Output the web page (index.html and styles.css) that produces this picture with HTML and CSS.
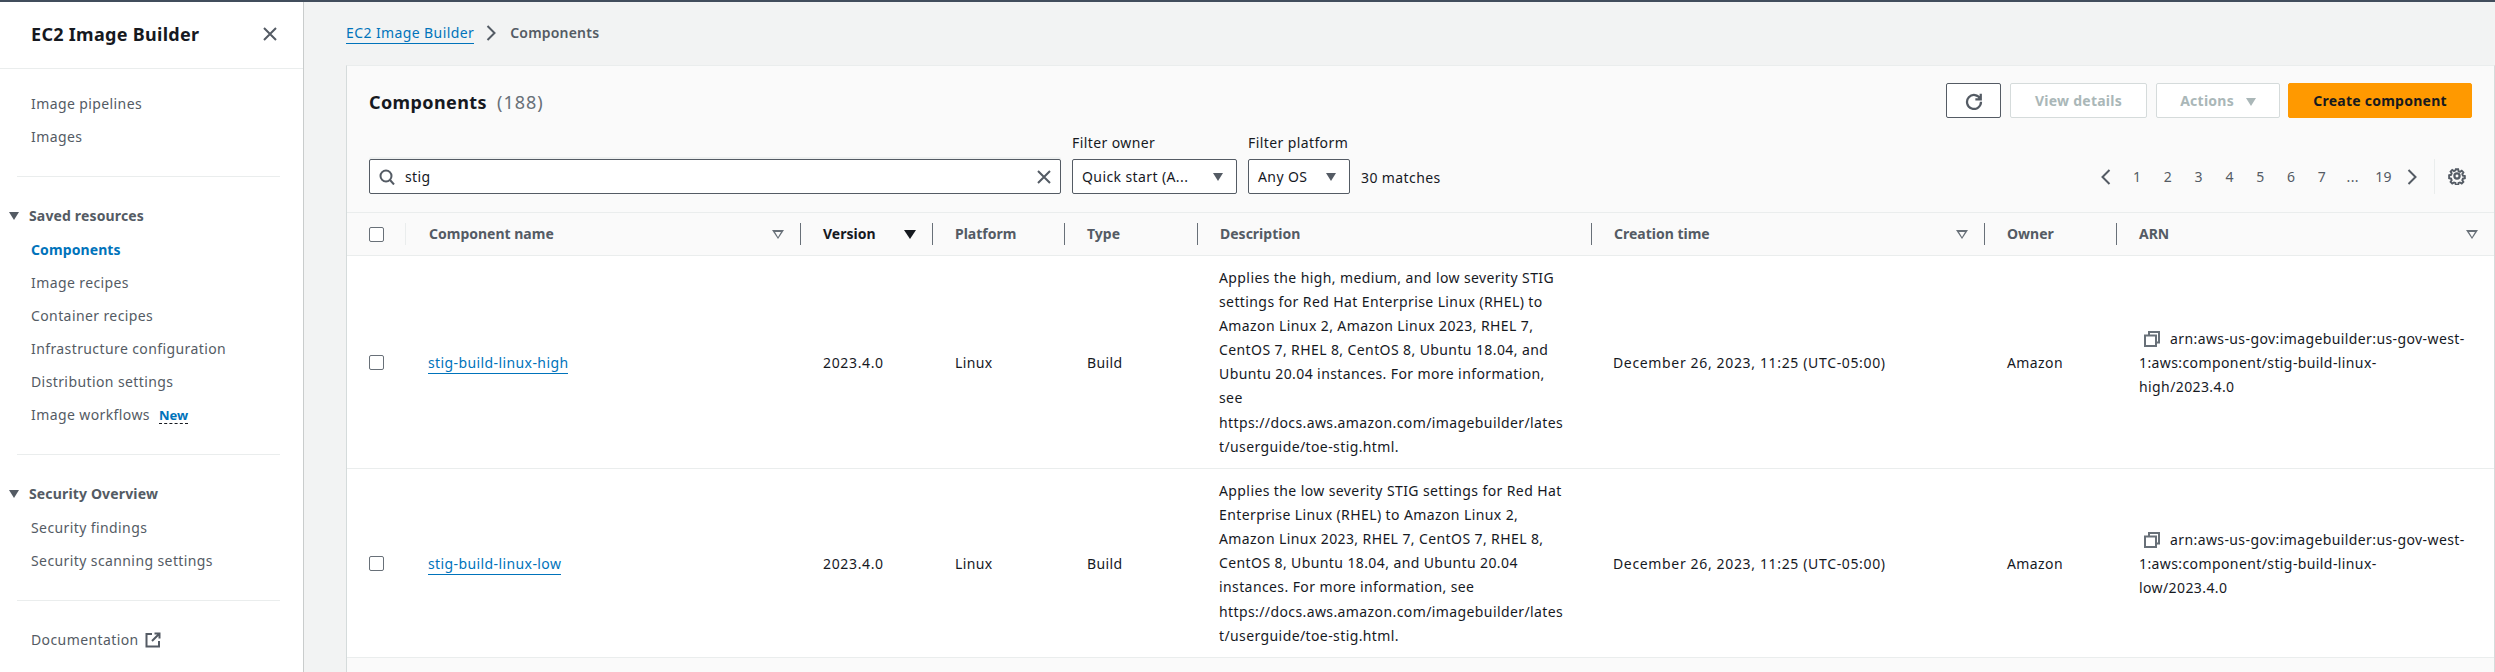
FILE: index.html
```html
<!doctype html>
<html>
<head>
    <meta charset="utf-8">
    <title>Components - EC2 Image Builder</title>
    <link rel="stylesheet" href="styles.css">
</head>

<body>
    <div class="page">

        <aside class="sidebar">
            <div class="side-head">
                <span class="side-title">EC2 Image Builder</span>
                <svg class="close-icon" viewBox="0 0 16 16"><path d="M2 2l12 12M14 2L2 14"/></svg>
            </div>

            <ul class="nav first">
                <li>Image pipelines</li>
                <li>Images</li>
            </ul>
            <hr class="nav-line">

            <div class="nav-group"><i class="caret"></i>Saved resources</div>
            <ul class="nav">
                <li class="active">Components</li>
                <li>Image recipes</li>
                <li>Container recipes</li>
                <li>Infrastructure configuration</li>
                <li>Distribution settings</li>
                <li>Image workflows <span class="new">New</span></li>
            </ul>
            <hr class="nav-line">

            <div class="nav-group"><i class="caret"></i>Security Overview</div>
            <ul class="nav">
                <li>Security findings</li>
                <li>Security scanning settings</li>
            </ul>
            <hr class="nav-line">

            <ul class="nav docs">
                <li>Documentation
                    <svg class="ext-icon" viewBox="0 0 16 16"><path d="M7 2H1.500v12.500H14V9M9.500 1.500h5v5M14.500 1.500L7 9"/></svg>
                </li>
            </ul>
        </aside>

        <main class="main">
            <div class="crumbs">
                <a class="crumb-link">EC2 Image Builder</a>
                <svg class="crumb-sep" viewBox="0 0 10 16"><path d="M1.500 1l7 7-7 7"/></svg>
                <span class="crumb-now">Components</span>
            </div>

            <section class="card">
                <div class="card-top">
                    <h1>Components <span class="count">(188)</span></h1>
                    <div class="actions">
                        <button class="btn refresh">
                            <svg viewBox="0 0 16 16"><path d="M13.600 6.200A6.200 6.200 0 1 0 14.200 8.600M14 1.500v5H9.200"/></svg>
                        </button>
                        <button class="btn off details">View details</button>
                        <button class="btn off act">Actions <i class="tri"></i></button>
                        <button class="btn primary">Create component</button>
                    </div>
                </div>

                <div class="filters">
                    <div class="search">
                        <svg class="search-icon" viewBox="0 0 16 16"><circle cx="7" cy="7" r="5.500"/><path d="M11 11l4 4.500"/></svg>
                        <span class="search-text">stig</span>
                        <svg class="clear-icon" viewBox="0 0 16 16"><path d="M2 2l12 12M14 2L2 14"/></svg>
                    </div>
                    <div class="field owner">
                        <label>Filter owner</label>
                        <div class="select"><span>Quick start (A...</span><i class="tri dark"></i></div>
                    </div>
                    <div class="field platform">
                        <label>Filter platform</label>
                        <div class="select"><span>Any OS</span><i class="tri dark"></i></div>
                    </div>
                    <span class="matches">30 matches</span>

                    <div class="pager">
                        <svg class="pg-arrow prev" viewBox="0 0 10 16"><path d="M8.500 1l-7 7 7 7"/></svg>
                        <span>1</span><span>2</span><span>3</span><span>4</span><span>5</span><span>6</span><span>7</span><span class="dots">...</span><span>19</span>
                        <svg class="pg-arrow next" viewBox="0 0 10 16"><path d="M1.500 1l7 7-7 7"/></svg>
                        <div class="pg-gear">
                            <svg viewBox="0 0 16 16"><path d="M6.800 1h2.400l.4 2 1.500.7 1.800-1.100 1.700 1.700-1.100 1.800.6 1.500 2 .4v2.400l-2 .4-.6 1.500 1.100 1.800-1.700 1.700-1.800-1.100-1.500.6-.4 2H6.800l-.4-2-1.500-.6-1.800 1.100-1.700-1.700 1.100-1.800-.6-1.500-2-.4V7.200l2-.4.6-1.500-1.100-1.800 1.700-1.700 1.800 1.100 1.500-.7z" transform="translate(1.100 1.100) scale(.86)"/><circle cx="8" cy="8" r="2.300"/></svg>
                        </div>
                    </div>
                </div>

                <table class="grid">
                    <colgroup>
                        <col class="c-check"><col class="c-name"><col class="c-ver"><col class="c-plat"><col class="c-type"><col class="c-desc"><col class="c-time"><col class="c-owner"><col class="c-arn">
                    </colgroup>
                    <thead>
                        <tr>
                            <th class="check-cell"><i class="box"></i></th>
                            <th><div class="th faint">Component name <i class="sort"></i></div></th>
                            <th><div class="th now">Version <i class="sort down"></i></div></th>
                            <th><div class="th">Platform</div></th>
                            <th><div class="th">Type</div></th>
                            <th><div class="th">Description</div></th>
                            <th><div class="th">Creation time <i class="sort"></i></div></th>
                            <th><div class="th">Owner</div></th>
                            <th><div class="th">ARN <i class="sort"></i></div></th>
                        </tr>
                    </thead>
                    <tbody>
                        <tr>
                            <td class="check-cell"><i class="box"></i></td>
                            <td><a class="link">stig-build-linux-high</a></td>
                            <td class="num">2023.4.0</td>
                            <td>Linux</td>
                            <td>Build</td>
                            <td class="desc">Applies the high, medium, and low severity STIG<br>settings for Red Hat Enterprise Linux (RHEL) to<br>Amazon Linux 2, Amazon Linux 2023, RHEL 7,<br>CentOS 7, RHEL 8, CentOS 8, Ubuntu 18.04, and<br>Ubuntu 20.04 instances. For more information,<br>see<span class="url">https://docs.aws.amazon.com/imagebuilder/lates<br>t/userguide/toe-stig.html.</span></td>
                            <td class="num time">December 26, 2023, 11:25 (UTC-05:00)</td>
                            <td>Amazon</td>
                            <td class="arn"><svg class="copy" viewBox="0 0 16 16"><path d="M5 4V1h10v10.500h-3M1 4.500h11V15H1z"/></svg>arn:aws-us-gov:imagebuilder:us-gov-west-<br>1:aws:component/stig-build-linux-<br>high/2023.4.0</td>
                        </tr>
                        <tr>
                            <td class="check-cell"><i class="box"></i></td>
                            <td><a class="link">stig-build-linux-low</a></td>
                            <td class="num">2023.4.0</td>
                            <td>Linux</td>
                            <td>Build</td>
                            <td class="desc">Applies the low severity STIG settings for Red Hat<br>Enterprise Linux (RHEL) to Amazon Linux 2,<br>Amazon Linux 2023, RHEL 7, CentOS 7, RHEL 8,<br>CentOS 8, Ubuntu 18.04, and Ubuntu 20.04<br>instances. For more information, see<span class="url">https://docs.aws.amazon.com/imagebuilder/lates<br>t/userguide/toe-stig.html.</span></td>
                            <td class="num time">December 26, 2023, 11:25 (UTC-05:00)</td>
                            <td>Amazon</td>
                            <td class="arn"><svg class="copy" viewBox="0 0 16 16"><path d="M5 4V1h10v10.500h-3M1 4.500h11V15H1z"/></svg>arn:aws-us-gov:imagebuilder:us-gov-west-<br>1:aws:component/stig-build-linux-<br>low/2023.4.0</td>
                        </tr>
                    </tbody>
                </table>
            </section>
        </main>
    </div>
</body>
</html>
```

FILE: styles.css
```css
* {
    box-sizing: border-box;
}
html, body {
    margin: 0;
    height: 100%;
    overflow: hidden;
}
body {
    font-family: "Noto Sans", "Open Sans", sans-serif;
    font-size: 14px;
    line-height: 24px;
    letter-spacing: .4px;
    color: #16191f;
    background: #f2f3f3;
}
svg {
    display: block;
    fill: none;
    stroke: #545b64;
    stroke-width: 2;
}
i {
    display: inline-block;
}

.page {
    display: flex;
    height: 672px;
    border-top: 2px solid #414d5c;
}

/* left nav */
.sidebar {
    width: 304px;
    flex: none;
    background: #fff;
    border-right: 1px solid #c9cccc;
    color: #545b64;
}
.side-head {
    height: 67px;
    padding: 0 24px 2px 31px;
    display: flex;
    align-items: center;
    justify-content: space-between;
    border-bottom: 1px solid #eaeded;
}
.side-title {
    font-size: 18px;
    font-weight: 700;
    letter-spacing: .3px;
    color: #16191f;
}
.close-icon {
    width: 16px;
    height: 16px;
    margin-right: 1px;
}
.nav {
    list-style: none;
    margin: 0;
    padding: 0 0 0 31px;
}
.nav li {
    height: 33px;
    line-height: 33px;
    white-space: nowrap;
}
.nav.first {
    padding-top: 18px;
}
.nav.docs {
    margin-top: -1px;
}
.nav .active {
    color: #0073bb;
    font-weight: 700;
    letter-spacing: .1px;
}
.nav-line {
    margin: 23px 23px 23px 17px;
    border: 0;
    border-top: 1px solid #eaeded;
}
.nav-group {
    height: 34px;
    line-height: 33px;
    margin-top: -1px;
    padding-left: 9px;
    font-weight: 700;
    letter-spacing: .15px;
}
.caret {
    width: 0;
    height: 0;
    margin-right: 10px;
    border-style: solid;
    border-width: 8px 5.5px 0;
    border-color: #545b64 transparent transparent;
    vertical-align: 1px;
}
.new {
    margin-left: 5px;
    font-size: 13px;
    font-weight: 700;
    letter-spacing: 0;
    color: #0073bb;
    border-bottom: 1px dashed #16191f;
    line-height: 16px;
    display: inline-block;
}
.ext-icon {
    display: inline-block;
    width: 16px;
    height: 16px;
    margin-left: 2px;
    vertical-align: -3px;
}

/* main */
.main {
    flex: 1;
    min-width: 0;
    padding-left: 42px;
}
.crumbs {
    height: 63px;
    padding-bottom: 1px;
    display: flex;
    align-items: center;
}
.crumb-link, .link {
    color: #0073bb;
    border-bottom: 1px solid #0073bb;
    line-height: 20px;
    display: inline-block;
}
.crumb-sep {
    width: 10px;
    height: 16px;
    margin: 0 14px 0 12px;
}
.crumb-now {
    font-weight: 600;
    letter-spacing: .2px;
    color: #545b64;
}

.card {
    background: #fafafa;
    border-top: 1px solid #eaeded;
    border-left: 1px solid #d5dbdb;
    border-right: 1px solid #d5dbdb;
    height: 607px;
}
.card-top {
    height: 76px;
    padding: 17px 22px 0 22px;
    display: flex;
    justify-content: space-between;
    align-items: flex-start;
}
h1 {
    margin: 0;
    padding-top: 2px;
    font-size: 18px;
    line-height: 35px;
    font-weight: 700;
    letter-spacing: .4px;
}
.count {
    margin-left: 5px;
    font-weight: 400;
    letter-spacing: 1px;
    color: #687078;
}
.actions {
    display: flex;
    gap: 9px;
}
.btn {
    height: 35px;
    padding: 0;
    font: 700 14px "Noto Sans", sans-serif;
    letter-spacing: .25px;
    background: #fff;
    border: 1px solid #545b64;
    border-radius: 2px;
}
.refresh {
    width: 55px;
    display: flex;
    align-items: center;
    justify-content: center;
}
.refresh svg {
    width: 18px;
    height: 18px;
}
.off {
    color: #aab7b8;
    border-color: #d5dbdb;
}
.details {
    width: 137px;
}
.act {
    width: 124px;
}
.primary {
    width: 184px;
    margin-left: -1px;
    border-color: #ff9900;
    background: #ff9900;
    color: #16191f;
}
.tri {
    width: 0;
    height: 0;
    margin-left: 8px;
    border-style: solid;
    border-width: 8px 5.5px 0;
    border-color: #aab7b8 transparent transparent;
    vertical-align: 0;
}
.tri.dark {
    border-color: #545b64 transparent transparent;
    margin: 0;
}

.filters {
    height: 70px;
    padding: 0 22px 18px;
    display: flex;
    align-items: flex-end;
}
.search {
    width: 692px;
    height: 35px;
    padding: 0 8px 0 9px;
    display: flex;
    align-items: center;
    background: #fff;
    border: 1px solid #545b64;
    border-radius: 2px;
    box-shadow: 0 -2px 0 #eef0f0;
}
.search-icon {
    width: 16px;
    height: 16px;
}
.search-text {
    flex: 1;
    margin-left: 10px;
}
.clear-icon {
    width: 16px;
    height: 16px;
}
.field {
    margin-left: 11px;
}
.field label {
    display: block;
    height: 26px;
    line-height: 20px;
    color: #16191f;
}
.select {
    height: 35px;
    padding: 0 13px 0 9px;
    display: flex;
    align-items: center;
    justify-content: space-between;
    background: #fff;
    border: 1px solid #545b64;
    border-radius: 2px;
}
.owner .select {
    width: 165px;
}
.platform .select {
    width: 102px;
}
.matches {
    margin-left: 11px;
    line-height: 33px;
    color: #16191f;
}
.pager {
    margin-left: auto;
    margin-right: 3px;
    height: 35px;
    display: flex;
    align-items: center;
    color: #545b64;
}
.pager span {
    width: 30.8px;
    text-align: center;
}
.pager .dots {
    line-height: 18px;
}
.pg-arrow {
    width: 10px;
    height: 16px;
}
.pg-arrow.prev {
    margin-right: 11px;
}
.pg-arrow.next {
    margin-left: 8px;
    margin-right: 6px;
}
.pg-gear {
    height: 35px;
    margin-left: 11px;
    padding: 8px 3px 0 13px;
    border-left: 1px solid #eaeded;
}
.pg-gear svg {
    width: 18px;
    height: 18px;
}

/* table */
.grid {
    width: 100%;
    table-layout: fixed;
    border-collapse: separate;
    border-spacing: 0;
}
.c-check { width: 58px; }
.c-name { width: 395px; }
.c-ver { width: 132px; }
.c-plat { width: 132px; }
.c-type { width: 133px; }
.c-desc { width: 394px; }
.c-time { width: 393px; }
.c-owner { width: 132px; }
.grid th {
    height: 44px;
    padding: 0;
    text-align: left;
    background: #fafafa;
    font-weight: 700;
    letter-spacing: 0;
    color: #545b64;
    border-top: 1px solid #eaeded;
    border-bottom: 1px solid #eaeded;
}
.th {
    height: 22px;
    line-height: 22px;
    padding: 0 16px 0 22px;
    border-left: 1px solid #687078;
    display: flex;
    justify-content: space-between;
    align-items: center;
}
.th.faint {
    border-left-color: #eaeded;
    padding-left: 23px;
}
.th.now {
    color: #16191f;
}
.sort {
    width: 0;
    height: 0;
    border-style: solid;
    border-width: 9px 6px 0;
    border-color: #687078 transparent transparent;
    position: relative;
}
.sort:after {
    content: "";
    position: absolute;
    left: -3px;
    top: -7px;
    border-style: solid;
    border-width: 5px 3px 0;
    border-color: #fafafa transparent transparent;
}
.sort.down {
    border-color: #16191f transparent transparent;
}
.sort.down:after {
    display: none;
}
.grid td {
    padding: 10px 10px 9px 23px;
    background: #fff;
    border-bottom: 1px solid #eaeded;
    white-space: nowrap;
}
.grid .check-cell {
    padding: 0 0 0 22px;
}
.grid .desc, .grid .time {
    padding-left: 22px;
}
.grid .num {
    letter-spacing: .65px;
}
.box {
    width: 15px;
    height: 15px;
    display: block;
    background: #fff;
    border: 1px solid #687078;
    border-radius: 2px;
}
.url {
    display: block;
    margin-top: 1px;
}
.copy {
    display: inline-block;
    width: 16px;
    height: 16px;
    margin: 0 10px 0 5px;
    vertical-align: -3px;
    stroke: #687078;
}
```
